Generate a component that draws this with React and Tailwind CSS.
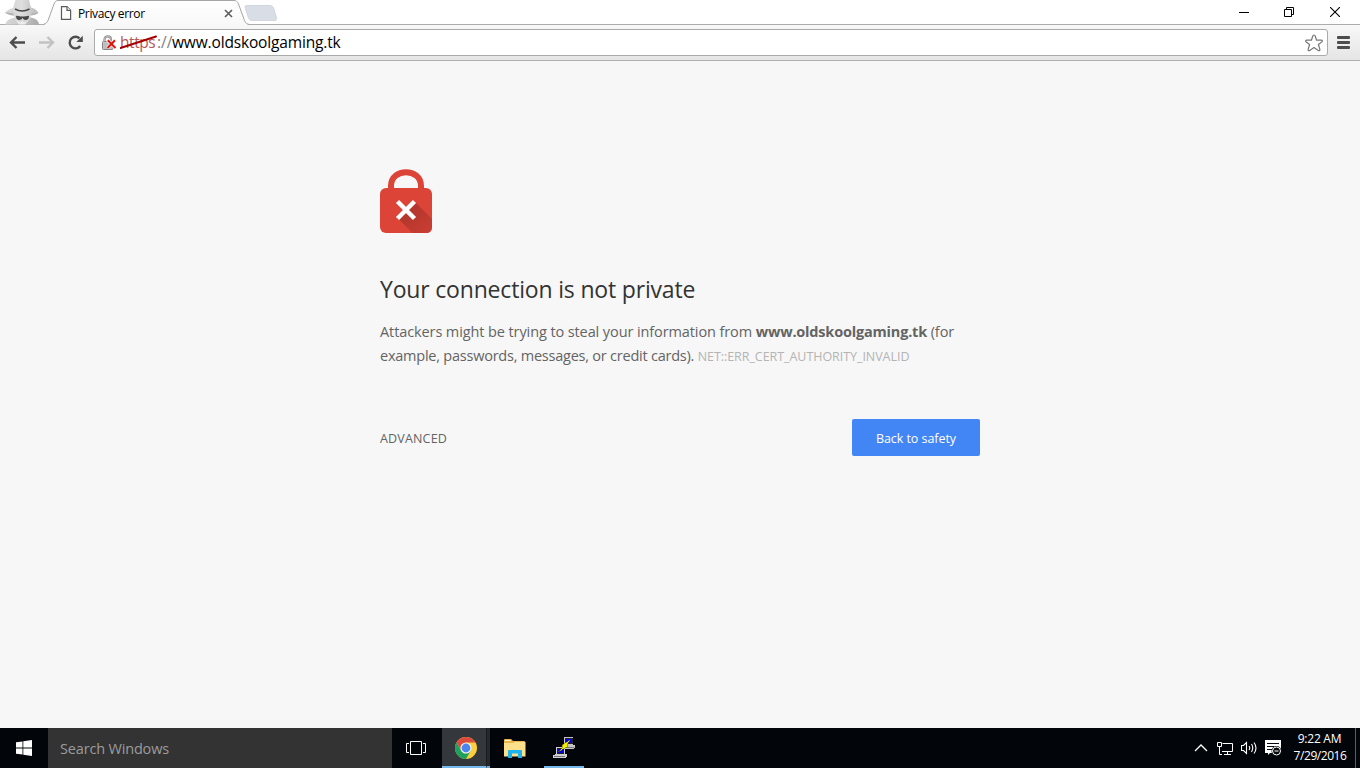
function IncognitoIcon() {
  return (
    <svg className="w-11 h-[25px] shrink-0" viewBox="0 0 44 25" fill="none">
      <defs>
        <linearGradient id="coat" x1="0" y1="0" x2="1" y2="0">
          <stop offset="0" stopColor="#d8d8d8" />
          <stop offset="0.5" stopColor="#c8c8c8" />
          <stop offset="1" stopColor="#a9a9a9" />
        </linearGradient>
        <linearGradient id="hat" x1="0" y1="0" x2="1" y2="0">
          <stop offset="0" stopColor="#d2d2d2" />
          <stop offset="0.5" stopColor="#dedede" />
          <stop offset="1" stopColor="#b8b8b8" />
        </linearGradient>
      </defs>
      <path d="M5 24.500C6 21 9 19 13 18L31 17.500C36 18.500 38.500 21 39 24.500Z" fill="url(#coat)" />
      <path d="M13 12H31L30 19L25 24H19L15 20Z" fill="#d6d6d6" />
      <path d="M15 19L20 22.500L22 21L25 22.500L29 19L25 24.500H19Z" fill="#ececec" />
      <path d="M5 12.500Q9 8.500 13 8L15.500 0H29L31 7.500Q36 8.500 38.500 13Q35 15 31 15.500H14Q8 15 5 12.500Z" fill="url(#hat)" />
      <path d="M5 12.500Q8 15 14 15.500L13 13ZM38.500 13Q35 15 31 15.500L32 13Z" fill="#b5b5b5" />
      <path d="M15 9Q22 13 29.500 9" stroke="#484848" strokeWidth="1.500" />
      <path d="M16 15.700C19 16.200 20 16.400 22 16.400C25 16.400 27 16.200 29 15.700C29.200 18.800 27.500 20 25.500 19.900C23.800 19.800 23.300 19 22.500 17.700C21.700 19 21 20 19 20C17 20 16 18.500 16 15.700Z" fill="#484848" />
    </svg>
  );
}

function TabShape() {
  return (
    <svg className="absolute left-0 top-0 w-[206px] h-[25px]" viewBox="0 0 206 25">
      <defs>
        <linearGradient id="tabFill" x1="0" y1="0" x2="0" y2="1">
          <stop offset="0" stopColor="#ffffff" />
          <stop offset="1" stopColor="#f8f8f8" />
        </linearGradient>
      </defs>
      <path d="M0 25C2 24 3 23 4 20.500L10 4C11 1.500 12 0.500 14 0.500H190C192 0.500 193.500 1.500 194.500 4L200.500 20.500C201.500 23 203 24.500 206 25Z" fill="url(#tabFill)" />
      <path d="M0 24C2 23.500 3 22.500 4 20.500L10 4C11 1.500 12 0.500 14 0.500H190C192 0.500 193.500 1.500 194.500 4L200.500 20.500C201.500 23 203 24.500 206 24.500" fill="none" stroke="#a5a5a5" />
    </svg>
  );
}

function TabStrip() {
  return (
    <div className="relative z-10 flex h-[25px] bg-white border-b border-[#adadad]">
      <IncognitoIcon />
      <div className="relative flex w-[206px] h-[25px] shrink-0">
        <TabShape />
        <div className="relative flex items-center w-full h-[25px] pl-4 pr-[17px]">
          <svg className="w-3 h-[14px] shrink-0" viewBox="0 0 12 14" fill="#fff" stroke="#5a5a5a" strokeWidth="1.200">
            <path d="M1.500 0.700H7L10.600 4.300V13.300H1.500Z" />
            <path d="M7 0.700V4.300H10.600" />
          </svg>
          <span className="ml-[6px] pt-[2px] text-[12px] tracking-[-0.360px] text-black whitespace-nowrap">Privacy error</span>
          <svg className="ml-auto mt-px w-[9px] h-[9px]" viewBox="0 0 9 9" stroke="#5c5c5c" strokeWidth="1.600">
            <path d="M1 1L8 8M8 1L1 8" />
          </svg>
        </div>
      </div>
      <svg className="-ml-[6px] mt-[5px] w-[34px] h-4 shrink-0" viewBox="0 0 34 16">
        <path d="M3 0.500H26C28 0.500 29 1.500 29.700 3.500L32.500 12.500C33 14.500 32.500 15.500 31 15.500H8C6 15.500 5 14.500 4.300 12.500L1.300 3.500C0.700 1.500 1 0.500 3 0.500Z" fill="#d9dee6" stroke="#cbd0d8" strokeWidth="0.800" />
      </svg>
      <div className="ml-auto flex items-center gap-[35px] pr-5 h-6">
        <svg className="w-[10px] h-[10px]" viewBox="0 0 10 10" stroke="#000">
          <path d="M0 5.500H10" />
        </svg>
        <svg className="mr-px w-[10px] h-[10px]" viewBox="0 0 10 10" stroke="#000" fill="none">
          <path d="M0.500 2.500H7.500V9.500H0.500ZM2.500 2.500V0.500H9.500V7.500H7.500" />
        </svg>
        <svg className="w-[10px] h-[10px]" viewBox="0 0 10 10" stroke="#000" strokeWidth="1.100">
          <path d="M0 0L10 10M10 0L0 10" />
        </svg>
      </div>
    </div>
  );
}

function BrokenLock() {
  return (
    <svg className="w-4 h-4 shrink-0" viewBox="0 0 16 16" fill="none">
      <path d="M3.500 8V4.500C3.500 0.300 10 0.300 10 4.500V7" stroke="#8a8a8a" strokeWidth="2.200" />
      <path d="M3.500 8V4.500C3.500 0.300 10 0.300 10 4.500V7" stroke="#d9d9d9" strokeWidth="0.700" />
      <rect x="1.500" y="6.500" width="10.500" height="8" rx="1" fill="#c9c9c9" stroke="#858585" />
      <path d="M2.500 9H11M2.500 11H11M2.500 13H11" stroke="#a9a9a9" strokeWidth="0.700" />
      <path d="M6.500 5L14.500 13M14 5L6.500 13.200" stroke="#fff" strokeWidth="3.200" />
      <path d="M6.800 5.200L14.500 13M14 5.200L6.500 13" stroke="#d8150f" strokeWidth="2" />
    </svg>
  );
}

function Toolbar() {
  return (
    <div className="flex items-center h-9 bg-linear-to-b from-[#f8f8f8] to-[#e5e5e5] border-b border-[#b0b0b0]">
      <svg className="ml-[9px] w-4 h-[14px] shrink-0" viewBox="0 0 16 14" fill="none" stroke="#4d4d4d" strokeWidth="2.400">
        <path d="M16 6.500H3M7.500 1L2 6.500L7.500 12" />
      </svg>
      <svg className="ml-[14px] w-4 h-[14px] shrink-0" viewBox="0 0 16 14" fill="none" stroke="#c2c2c2" strokeWidth="2.400">
        <path d="M0 6.500H13M8.500 1L14 6.500L8.500 12" />
      </svg>
      <svg className="ml-3 w-[17px] h-4 shrink-0" viewBox="0 0 17 16" fill="none">
        <path d="M13.200 11A5.800 5.800 0 1 1 12.500 3.400" stroke="#4d4d4d" strokeWidth="2.400" />
        <path d="M15.800 0.700V7H9.300Z" fill="#4d4d4d" />
      </svg>
      <div className="ml-[10px] flex items-center w-[1234px] h-[27px] pl-[6px] pr-1 bg-white border border-[#aaaaaa] rounded-[3px]">
        <BrokenLock />
        <div className="relative ml-[3px] mt-px flex text-[15.500px] whitespace-nowrap">
          <span className="w-[37px] tracking-[-0.450px] text-[#b5595c]">https</span>
          <span className="w-[15px] text-[#808080]">://</span>
          <span className="tracking-[-0.160px] text-black">www.oldskoolgaming.tk</span>
          <svg className="absolute left-0 top-[4px] w-[37px] h-[14px]" viewBox="0 0 37 14">
            <path d="M0.500 13L36 1.500" stroke="#a40000" strokeWidth="2" strokeLinecap="round" />
          </svg>
        </div>
        <svg className="ml-auto w-[18px] h-[18px]" viewBox="0 0 18 18" fill="#fff" stroke="#777" strokeWidth="1.200" strokeLinejoin="round">
          <path d="M9 1C9.800 1 10 1.500 10.300 2.300L11.600 6.200H16.200C17.500 6.200 17.700 7.200 16.800 7.900L13.400 10.500L14.800 15.200C15.100 16.500 14.400 17.100 13.300 16.400L9 13.500L4.700 16.400C3.600 17.100 2.900 16.500 3.200 15.200L4.600 10.500L1.200 7.900C0.300 7.200 0.500 6.200 1.800 6.200H6.400L7.700 2.300C8 1.500 8.200 1 9 1Z" />
        </svg>
      </div>
      <div className="ml-[9px] flex flex-col gap-[2px]">
        <div className="w-[13px] h-[3px] rounded-[1px] bg-[#4d4d4d]" />
        <div className="w-[13px] h-[3px] rounded-[1px] bg-[#4d4d4d]" />
        <div className="w-[13px] h-[3px] rounded-[1px] bg-[#4d4d4d]" />
      </div>
    </div>
  );
}

function RedLock() {
  return (
    <svg className="w-[52px] h-[65px]" viewBox="0 0 52 65" fill="none">
      <defs>
        <linearGradient id="shade" x1="0" y1="0" x2="1" y2="1">
          <stop offset="0" stopColor="#a5332a" />
          <stop offset="1" stopColor="#cc3e32" />
        </linearGradient>
      </defs>
      <path d="M11 24V17C11 -1.500 41 -1.500 41 17V24" stroke="#db4437" strokeWidth="6" />
      <rect y="19" width="52" height="45" rx="6" fill="#db4437" />
      <path d="M33.500 31.500L52 50V58Q52 64 46 64H32.500L17 48.500Z" fill="url(#shade)" />
      <path d="M17.500 32.500L34.500 49.500M34.500 32.500L17.500 49.500" stroke="#fff" strokeWidth="4.500" />
    </svg>
  );
}

function PrivacyError() {
  return (
    <main className="flex-1 bg-[#f7f7f7]">
      <div className="w-[600px] mx-auto pt-[108px] text-[#646464]">
        <RedLock />
        <h1 className="mt-[39px] h-8 leading-8 text-[23px] tracking-[-0.180px] text-[#333] whitespace-nowrap">
          Your connection is not private
        </h1>
        <p className="mt-[15px] text-[14.500px] leading-6 tracking-[-0.100px] whitespace-nowrap">
          Attackers might be trying to steal your information from{' '}
          <strong className="font-bold tracking-[-0.190px]">www.oldskoolgaming.tk</strong> (for
          <br />
          <span className="tracking-[-0.230px]">example, passwords, messages, or credit cards). </span>
          <span className="text-[12.500px] tracking-[-0.050px] text-[#b4b4b4]">NET::ERR_CERT_AUTHORITY_INVALID</span>
        </p>
        <div className="mt-[50px] flex items-center justify-between">
          <button className="pt-[3px] text-[12.500px] tracking-[0.170px]">ADVANCED</button>
          <button className="w-32 h-[37px] pt-[3px] rounded-[2px] bg-[#4285f4] text-[12.500px] tracking-[-0.050px] text-white">
            Back to safety
          </button>
        </div>
      </div>
    </main>
  );
}

function ChromeIcon() {
  return (
    <svg className="mt-px w-[22px] h-[22px]" viewBox="0 0 22 22">
      <circle cx="11" cy="11" r="11" fill="#fccd3c" />
      <path d="M1.470 5.500A11 11 0 0 1 20.530 5.500H11L6.240 13.750Z" fill="#dd4b3e" />
      <path d="M1.470 5.500L6.240 13.750A5.500 5.500 0 0 0 11 16.500L15.760 13.750L11 22A11 11 0 0 1 1.470 5.500Z" fill="#1fa05c" />
      <circle cx="11" cy="11" r="5.600" fill="#f4f4f4" />
      <circle cx="11" cy="11" r="4.400" fill="#4a86ee" />
    </svg>
  );
}

function FolderIcon() {
  return (
    <svg className="w-[22px] h-[19px]" viewBox="0 0 22 19">
      <path d="M0 1Q0 0 1 0H7L9 2H20Q21 2 21 3V17H0Z" fill="#e8b64d" />
      <path d="M0 4H9L11 3H21.500V17.500H0Z" fill="#ffe08a" />
      <path d="M1 1H6.500V2H1Z" fill="#fff5c8" />
      <path d="M4 19V12Q4 11 5 11H17Q18 11 18 12V19H14V14.500H8V19Z" fill="#1cb3ee" />
    </svg>
  );
}

function PuttyIcon() {
  return (
    <svg className="w-[22px] h-[23px]" viewBox="0 0 22 23" shapeRendering="crispEdges">
      <path d="M11 1H20V9H22V11L20 13H9V10L11 9Z" fill="#c4c4c4" />
      <path d="M12.500 2.500H19V7.500H12.500Z" fill="#0000e0" stroke="#222" />
      <path d="M13 11.500H21" stroke="#777" />
      <path d="M3 11H12V18H14V20L12 22H0V19L3 18Z" fill="#d0d0d0" />
      <path d="M4.500 12.500H10.500V17.500H4.500Z" fill="#0000e0" stroke="#222" />
      <path d="M1 20.500H12" stroke="#777" />
      <path d="M17 4L9 9V12L5 16L14 11V8.500Z" fill="#f4ee00" stroke="#6c6a00" strokeWidth="0.500" />
    </svg>
  );
}

function Tray() {
  return (
    <div className="ml-auto flex items-center h-full text-white">
      <svg className="w-[14px] h-2" viewBox="0 0 14 8" fill="none" stroke="#fff" strokeWidth="1.300">
        <path d="M1 7L7 1L13 7" />
      </svg>
      <svg className="ml-[9px] w-[17px] h-[15px]" viewBox="0 0 17 15" fill="none" stroke="#fff">
        <path d="M5.500 2.500H15.500V10.500H5M10.500 10.500V13.500M7 13.500H14" />
        <path d="M0.500 1.500H4.500V5.500H0.500ZM2.500 5.500V13.500H5" />
      </svg>
      <svg className="ml-[7px] w-[17px] h-[14px]" viewBox="0 0 17 14" fill="none" stroke="#fff" strokeWidth="1.100">
        <path d="M0.500 4.500H2.500L5.500 1.500V12.500L2.500 9.500H0.500Z" />
        <path d="M8 5Q9.500 7 8 9M10.500 3Q13 7 10.500 11M13 1.500Q17 7 13 12.500" />
      </svg>
      <svg className="ml-[7px] w-4 h-4" viewBox="0 0 16 16">
        <path d="M0 0H16V13H5L3 15V13H0Z" fill="#fff" />
        <path d="M2 3.500H14M2 6.500H9M2 9.500H7" stroke="#05080c" />
        <circle cx="11.500" cy="11" r="5" fill="#05080c" />
        <circle cx="11.500" cy="11" r="4" fill="#05080c" stroke="#fff" />
        <path d="M9.500 11H13.500" stroke="#fff" />
      </svg>
      <div className="ml-3 mb-[3px] w-[54px] text-[12px] leading-[17px] text-center whitespace-nowrap">
        <div className="pr-px tracking-[-0.250px]">9:22 AM</div>
        <div className="tracking-[-0.450px]">7/29/2016</div>
      </div>
      <div className="ml-[8px] mr-1 w-px h-full bg-[#5b5e62]" />
    </div>
  );
}

function Taskbar() {
  return (
    <div className="flex items-center h-10 bg-[#020509]">
      <div className="flex items-center justify-center w-12">
        <svg className="w-4 h-4" viewBox="0 0 16 16" fill="#fff">
          <path d="M0 2.300L6.500 1.400V7.600H0ZM7.300 1.200L16 0V7.600H7.300ZM0 8.400H6.500V14.600L0 13.700ZM7.300 8.400H16V16L7.300 14.800Z" />
        </svg>
      </div>
      <div className="flex items-center w-[344px] h-full pl-3 pt-[2px] bg-[#333333] text-[14.500px] tracking-[-0.170px] text-[#9b9b9b]">
        Search Windows
      </div>
      <div className="flex items-center justify-center w-[50px] pr-[2px]">
        <svg className="w-5 h-[14px]" viewBox="0 0 20 14" fill="none" stroke="#fff">
          <path d="M4.500 0.500H15.500V13.500H4.500ZM3 2.500H0.500V11.500H3M17 2.500H19.500V11.500H17" />
        </svg>
      </div>
      <div className="flex h-full">
        <div className="flex items-center justify-center w-11 h-full pl-[3px] bg-[#34383c] border-b-2 border-[#76b9ed]">
          <ChromeIcon />
        </div>
        <div className="w-1 h-full bg-[#25292d] border-l border-b-2 border-l-[#1a1d21] border-b-[#6aa7d6]" />
      </div>
      <div className="flex items-center justify-center w-[50px]">
        <FolderIcon />
      </div>
      <div className="flex items-center justify-center ml-1 w-10 h-full border-b-2 border-[#76b9ed]">
        <PuttyIcon />
      </div>
      <Tray />
    </div>
  );
}

export default function App() {
  return (
    <div className="flex flex-col w-[1360px] h-[768px] overflow-hidden font-['Open_Sans','Noto_Sans',sans-serif]">
      <TabStrip />
      <Toolbar />
      <PrivacyError />
      <Taskbar />
    </div>
  );
}
